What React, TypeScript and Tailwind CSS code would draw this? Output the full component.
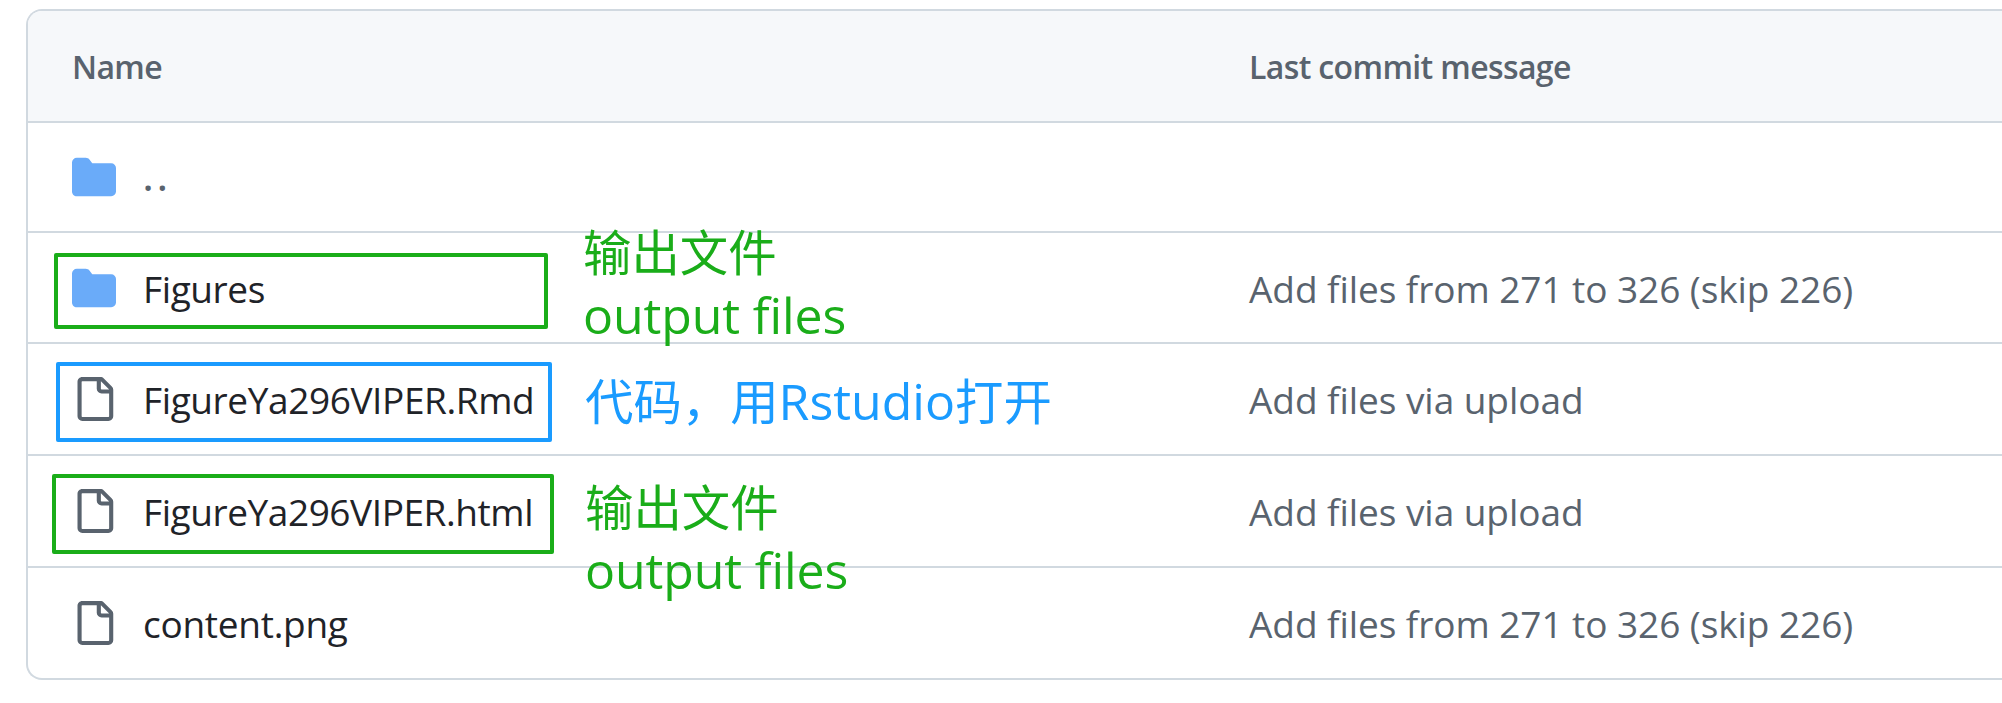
import type { ReactNode } from "react";

type Entry = {
  kind: "parent" | "folder" | "file";
  name: string;
  nameClass: string;
  message?: string;
  messageClass?: string;
  rowClass: string;
};

const entries: Entry[] = [
  { kind: "parent", name: "..", nameClass: "font-semibold tracking-[4px]", rowClass: "h-[110px] border-b-2" },
  {
    kind: "folder",
    name: "Figures",
    nameClass: "pt-[3px] tracking-[-0.4px]",
    message: "Add files from 271 to 326 (skip 226)",
    messageClass: "pt-[3px] tracking-[-0.06px]",
    rowClass: "h-[111px] border-b-2",
  },
  {
    kind: "file",
    name: "FigureYa296VIPER.Rmd",
    nameClass: "pt-px tracking-[-0.4px]",
    message: "Add files via upload",
    messageClass: "pt-px tracking-[-0.05px]",
    rowClass: "h-[112px] border-b-2",
  },
  {
    kind: "file",
    name: "FigureYa296VIPER.html",
    nameClass: "pt-px tracking-[-0.43px]",
    message: "Add files via upload",
    messageClass: "pt-px tracking-[-0.05px]",
    rowClass: "h-[112px] border-b-2",
  },
  {
    kind: "file",
    name: "content.png",
    nameClass: "pt-px tracking-[-0.27px]",
    message: "Add files from 271 to 326 (skip 226)",
    messageClass: "pt-px tracking-[-0.06px]",
    rowClass: "h-[110px]",
  },
];

function FolderIcon() {
  return (
    <svg className="size-11 shrink-0 fill-[#6aabf9]" viewBox="0 0 16 16" aria-hidden="true">
      <path d="M1.75 1A1.75 1.75 0 0 0 0 2.75v10.5C0 14.216.784 15 1.75 15h12.5A1.75 1.75 0 0 0 16 13.25v-8.5A1.75 1.75 0 0 0 14.25 3H7.5a.25.25 0 0 1-.2-.1l-.9-1.2C6.07 1.26 5.55 1 5 1H1.75Z" />
    </svg>
  );
}

function FileIcon() {
  return (
    <svg className="size-11 shrink-0 fill-[#59636e]" viewBox="0 0 16 16" aria-hidden="true">
      <path d="M2 1.75C2 .784 2.784 0 3.75 0h6.586c.464 0 .909.184 1.237.513l2.914 2.914c.329.328.513.773.513 1.237v9.586A1.75 1.75 0 0 1 13.25 16h-9.5A1.75 1.75 0 0 1 2 14.25Zm1.75-.25a.25.25 0 0 0-.25.25v12.5c0 .138.112.25.25.25h9.5a.25.25 0 0 0 .25-.25V6h-2.75A1.75 1.75 0 0 1 9 4.25V1.5Zm6.75.062V4.25c0 .138.112.25.25.25h2.688l-.011-.013-2.914-2.914-.013-.011Z" />
    </svg>
  );
}

function Row({ entry }: { entry: Entry }) {
  return (
    <div className={`flex items-center border-[#d1d9e0] pl-[44px] text-[37px] leading-[56px] ${entry.rowClass}`}>
      <div className="flex w-[1177px] shrink-0 items-center gap-[27px]">
        {entry.kind === "file" ? <FileIcon /> : <FolderIcon />}
        <span className={`${entry.kind === "parent" ? "text-[#59636e]" : "text-[#1f2328]"} ${entry.nameClass}`}>
          {entry.name}
        </span>
      </div>
      <span className={`whitespace-nowrap text-[#59636e] ${entry.messageClass ?? ""}`}>{entry.message}</span>
    </div>
  );
}

function Cjk({ children }: { children: ReactNode }) {
  return <span className="font-['Noto_Sans_CJK_SC',sans-serif] text-[48.4px] tracking-normal">{children}</span>;
}

function OutputNote({ className }: { className: string }) {
  return (
    <div className={`absolute whitespace-nowrap text-[#1aad19] ${className}`}>
      <div className="font-['Noto_Sans_CJK_SC',sans-serif] text-[48.4px] leading-[63px]">输出文件</div>
      <div className="pt-[2px] text-[50px] leading-[63px] tracking-[-0.12px]">output files</div>
    </div>
  );
}

export default function App() {
  return (
    <div className="relative h-[703px] w-full overflow-hidden bg-white pl-[26px] pt-[9px] font-['Open_Sans','Noto_Sans_CJK_SC',sans-serif]">
      <div className="overflow-hidden rounded-l-[16px] border-2 border-r-0 border-[#d1d9e0]">
        <div className="flex h-[112px] items-center border-b-2 border-[#d1d9e0] bg-[#f6f8fa] pl-[44px] pt-[2px] text-[32px] font-semibold tracking-[-0.63px] text-[#59636e]">
          <span className="w-[1177px] shrink-0">Name</span>
          <span className="whitespace-nowrap">Last commit message</span>
        </div>
        {entries.map((entry) => (
          <Row key={entry.name} entry={entry} />
        ))}
      </div>

      <div className="absolute left-[54px] top-[253px] h-[76px] w-[494px] rounded-[2px] border-4 border-[#1aad19]" />
      <div className="absolute left-[56px] top-[362px] h-[80px] w-[496px] rounded-[2px] border-4 border-[#1a9bff]" />
      <div className="absolute left-[52px] top-[474px] h-[80px] w-[502px] rounded-[2px] border-4 border-[#1aad19]" />

      <OutputNote className="left-[583px] top-[219px]" />
      <div className="absolute left-[585px] top-[369px] whitespace-nowrap text-[50px] leading-[60px] text-[#1a9bff]">
        <Cjk>代码，用</Cjk>Rstudio<Cjk>打开</Cjk>
      </div>
      <OutputNote className="left-[585px] top-[474px]" />
    </div>
  );
}
